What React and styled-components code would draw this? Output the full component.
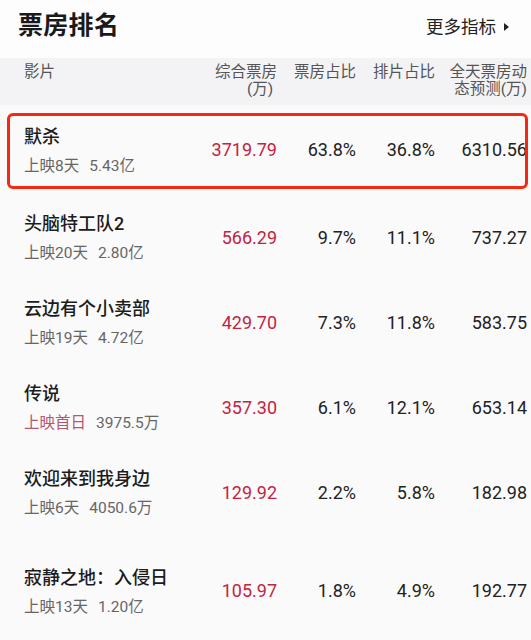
import React from 'react';
import styled, { createGlobalStyle } from 'styled-components';

const GlobalStyle = createGlobalStyle`
  body {
    margin: 0;
    background: #fafafb;
    font-family: Roboto, "Noto Sans CJK SC", sans-serif;
    color: #222;
  }
`;

const Page = styled.div`
  width: 531px;
  height: 640px;
  overflow: hidden;
  background: #fafafb;
`;

const TopBar = styled.div`
  height: 58px;
  display: flex;
  align-items: flex-start;
  justify-content: space-between;
  padding: 0 22px 0 18px;
  background: #fdfdfd;
`;

const Title = styled.h1`
  margin: 9px 0 0;
  font-size: 25px;
  line-height: 34px;
  font-weight: 700;
  color: #1a1a1a;
  letter-spacing: 0.3px;
`;

const MoreLink = styled.div`
  display: flex;
  align-items: center;
  gap: 8px;
  margin-top: 15px;
  font-size: 17.5px;
  line-height: 24px;
  color: #222;
`;

const Caret = styled.span`
  width: 0;
  height: 0;
  border-top: 4px solid transparent;
  border-bottom: 4px solid transparent;
  border-left: 5px solid #222;
`;

const HeadRow = styled.div`
  display: flex;
  height: 47px;
  box-sizing: border-box;
  padding: 6px 4px 0 24px;
  background: #f3f3f6;
  font-size: 15.5px;
  line-height: 17px;
  color: #555;
`;

const Row = styled.div`
  position: relative;
  display: flex;
  align-items: center;
  height: ${(p) => p.$h}px;
  padding: 0 4px 0 24px;
  box-sizing: border-box;
`;

const Highlight = styled.div`
  position: absolute;
  left: 7px;
  right: 3px;
  top: 8px;
  bottom: 6px;
  border: 3px solid #f5290f;
  border-radius: 6px;
  pointer-events: none;
`;

const NameCell = styled.div`
  flex: 1;
  min-width: 0;
  display: flex;
  flex-direction: column;
  gap: 7px;
`;

const Cell = styled.div`
  width: ${(p) => p.$w}px;
  flex: none;
  text-align: right;
  white-space: nowrap;
`;

const MovieName = styled.div`
  font-size: 18px;
  line-height: 24px;
  color: #1c1c1c;
  font-weight: 500;
`;

const Meta = styled.div`
  font-size: 15.5px;
  line-height: 20px;
  color: #666;
  display: flex;
  gap: 10px;
`;

const Days = styled.span`
  color: ${(p) => (p.$first ? '#b4566d' : '#666')};
`;

const Num = styled(Cell)`
  font-size: 18px;
  line-height: 24px;
  color: ${(p) => (p.$red ? '#c4233f' : '#222')};
`;

const widths = [90, 79, 79, 92];

const movies = [
  { name: '默杀', days: '上映8天', total: '5.43亿', box: '3719.79', share: '63.8%', sched: '36.8%', est: '6310.56', h: 90, hl: true },
  { name: '头脑特工队2', days: '上映20天', total: '2.80亿', box: '566.29', share: '9.7%', sched: '11.1%', est: '737.27', h: 85 },
  { name: '云边有个小卖部', days: '上映19天', total: '4.72亿', box: '429.70', share: '7.3%', sched: '11.8%', est: '583.75', h: 85 },
  { name: '传说', days: '上映首日', total: '3975.5万', box: '357.30', share: '6.1%', sched: '12.1%', est: '653.14', h: 85, first: true },
  { name: '欢迎来到我身边', days: '上映6天', total: '4050.6万', box: '129.92', share: '2.2%', sched: '5.8%', est: '182.98', h: 85 },
  { name: '寂静之地：入侵日', days: '上映13天', total: '1.20亿', box: '105.97', share: '1.8%', sched: '4.9%', est: '192.77', h: 112 },
];

const App = () => (
  <Page>
    <GlobalStyle />
    <TopBar>
      <Title>票房排名</Title>
      <MoreLink>
        更多指标
        <Caret />
      </MoreLink>
    </TopBar>
    <HeadRow>
      <NameCell>影片</NameCell>
      <Cell $w={widths[0]}>综合票房<br />(万)&nbsp;</Cell>
      <Cell $w={widths[1]}>票房占比</Cell>
      <Cell $w={widths[2]}>排片占比</Cell>
      <Cell $w={widths[3]}>全天票房动<br />态预测(万)</Cell>
    </HeadRow>
    {movies.map((m) => (
      <Row key={m.name} $h={m.h}>
        {m.hl && <Highlight />}
        <NameCell>
          <MovieName>{m.name}</MovieName>
          <Meta>
            <Days $first={m.first}>{m.days}</Days>
            <span>{m.total}</span>
          </Meta>
        </NameCell>
        <Num $w={widths[0]} $red>{m.box}</Num>
        <Num $w={widths[1]}>{m.share}</Num>
        <Num $w={widths[2]}>{m.sched}</Num>
        <Num $w={widths[3]}>{m.est}</Num>
      </Row>
    ))}
  </Page>
);

export default App;
